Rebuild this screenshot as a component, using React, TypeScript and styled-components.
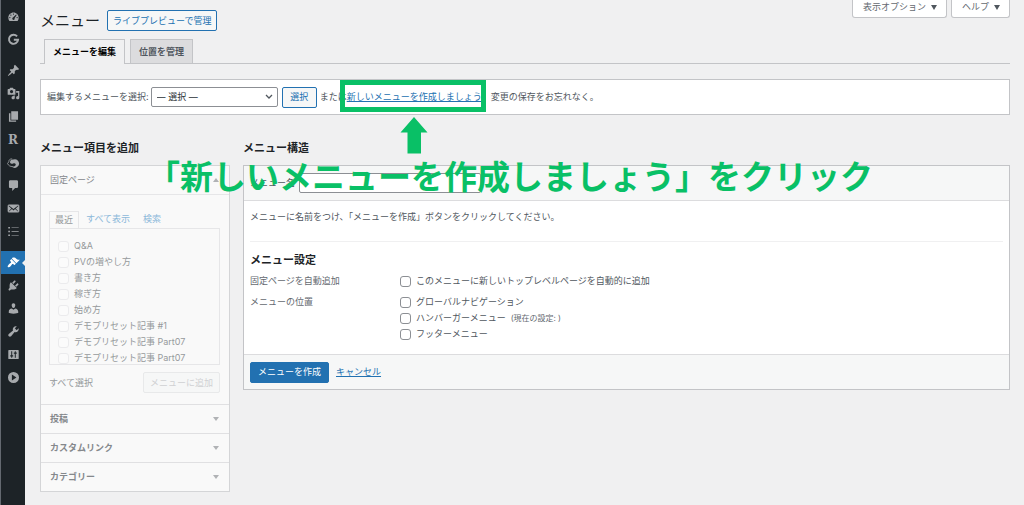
import React from "react";
import styled, { createGlobalStyle, css } from "styled-components";

const GlobalStyle = createGlobalStyle`
  *, *::before, *::after { box-sizing: border-box; }
  body {
    margin: 0;
    background: #f0f0f1;
    color: #50575e;
    font: 9px/16px Inter, "Noto Sans CJK JP", sans-serif;
  }
  h1, h2, h3, p, ul, fieldset { margin: 0; padding: 0; border: 0; }
  ul { list-style: none; }
  button, input, select { font: inherit; color: inherit; margin: 0; }
  a { color: #2271b1; }
`;

const Page = styled.div`
  position: relative;
  display: flex;
  min-height: 100vh;
  overflow: hidden;
`;

/* ---------- admin menu ---------- */

const Sidebar = styled.nav`
  flex: 0 0 25px;
  padding-top: 5px;
  background: #1d2327;
  border-left: 1px solid #646970;
`;

const MenuLink = styled.a<{ $active?: boolean; $spaced?: boolean }>`
  position: relative;
  display: flex;
  align-items: center;
  justify-content: center;
  height: 23px;
  margin-top: ${(p) => (p.$spaced ? 8 : 0)}px;
  color: ${(p) => (p.$active ? "#fff" : "#a7aaad")};
  background: ${(p) => (p.$active ? "#2271b1" : "transparent")};
  text-decoration: none;
  ${(p) =>
    p.$active &&
    css`
      &::after {
        content: "";
        position: absolute;
        right: 0;
        border: 3px solid transparent;
        border-right-color: #f0f0f1;
        border-left: 0;
      }
    `}
  svg { width: 13px; height: 13px; fill: currentColor; }
`;

const Initial = styled.span`
  font: bold 12px/14px "DejaVu Serif", serif;
`;

const paths = {
  dashboard:
    "M3.76 17h12.48A7.98 7.98 0 0 0 18 12c0-4.42-3.58-8-8-8s-8 3.58-8 8c0 1.89.66 3.63 1.76 5zM10 5.2a1 1 0 1 1 0 2 1 1 0 0 1 0-2zM6 6.8a1 1 0 1 1 0 2 1 1 0 0 1 0-2zm8 0 .9.9-3.2 4.9c.4 1.500-.4 2.600-1.700 2.600-1.300 0-2.200-1.200-1.800-2.400.2-.6.5-.9 1-1.200zM4.400 10.600a1 1 0 1 1 0 2 1 1 0 0 1 0-2zm11.200 0a1 1 0 1 1 0 2 1 1 0 0 1 0-2z",
  pin: "M10.44 3.02l1.82-1.82 6.36 6.35-1.83 1.82c-1.05-.68-2.48-.57-3.41.36l-.75.75c-.92.93-1.04 2.35-.35 3.41l-1.83 1.82-2.41-2.41-2.8 2.79c-.42.42-3.38 2.71-3.8 2.29s1.86-3.39 2.28-3.81l2.79-2.79L4.1 9.36l1.83-1.82c1.05.69 2.48.57 3.4-.36l.75-.75c.93-.92 1.05-2.35.36-3.41z",
  media:
    "M13 11V4c0-.55-.45-1-1-1h-1.67L9 1H5L3.67 3H2c-.55 0-1 .45-1 1v7c0 .55.45 1 1 1h10c.55 0 1-.45 1-1zM7 4.500a2.500 2.500 0 1 1 0 5 2.500 2.500 0 0 1 0-5zM14 6h5v10.500c0 1.380-1.120 2.500-2.500 2.500S14 17.880 14 16.500s1.120-2.500 2.500-2.500c.17 0 .34.02.5.05V9h-3V6zm-4 8.050V13h2v3.500c0 1.380-1.120 2.500-2.500 2.500S7 17.880 7 16.500 8.120 14 9.500 14c.17 0 .34.02.5.05z",
  page: "M6.500 2H17v13H6.500zM3 5h2.300v11.200H14V18H3z",
  comment:
    "M5 2h10c1.1 0 2 .9 2 2v8c0 1.100-.9 2-2 2h-2.500L8 18.500V14H5c-1.100 0-2-.9-2-2V4c0-1.100.9-2 2-2z",
  mail: "M2.500 4h15L19 5.500v9L17.500 16h-15L1 14.500v-9zM3 5.300 2.400 6l4.200 4-4 4.200.5.500 4.500-3.800L10 13l2.400-2.100 4.500 3.800.5-.5-4-4.200 4.200-4-.6-.7L10 10.700z",
  brush:
    "M14.480 11.060 7.410 3.990l1.500-1.500c.5-.56 2.300-.47 3.510.32 1.210.8 1.430 1.280 2.910 2.100 1.180.64 2.450 1.260 4.450.85zm-.71.71L6.700 4.700 4.930 6.470c-.39.39-.39 1.020 0 1.410l1.060 1.060c.39.39.39 1.030 0 1.420-.6.6-1.430 1.110-2.210 1.690-.35.26-.7.53-1.010.84C1.430 14.230.4 16.080 1.400 17.070c.99 1 2.840-.03 4.180-1.360.31-.31.58-.66.85-1.020.57-.78 1.080-1.610 1.690-2.210.39-.39 1.020-.39 1.410 0l1.060 1.060c.39.39 1.020.39 1.410 0z",
  plugin:
    "M13.110 4.360 9.870 7.600 8 5.730l3.240-3.240c.35-.34 1.050-.2 1.560.32.52.51.66 1.210.31 1.550zm-8 1.770.91-1.120 9.010 9.010-1.190.84c-.71.71-2.630 1.160-3.820 1.160H6.140L4.900 17.260c-.59.59-1.540.59-2.120 0-.59-.58-.59-1.530 0-2.120l1.240-1.240v-3.880c0-1.130.4-3.190 1.090-3.890zm7.260 3.970 3.240-3.240c.34-.35 1.040-.21 1.550.31.52.51.66 1.210.31 1.550l-3.240 3.250z",
  user: "M10 9.250c-2.270 0-2.730-3.440-2.730-3.440C7 4.020 7.820 2 9.970 2c2.160 0 2.980 2.020 2.710 3.810 0 0-.41 3.440-2.680 3.440zm0 2.570L12.720 10c2.390 0 4.520 2.330 4.520 4.530v2.490s-3.650 1.130-7.240 1.130c-3.650 0-7.240-1.130-7.240-1.130v-2.490c0-2.250 1.940-4.480 4.470-4.480z",
  wrench:
    "M16.680 9.770c-1.340 1.340-3.300 1.670-4.950.99l-5.410 6.520c-.99.99-2.590.99-3.580 0s-.99-2.590 0-3.570l6.520-5.420c-.68-1.650-.35-3.610.99-4.950 1.280-1.280 3.120-1.620 4.720-1.060l-2.890 2.890 2.820 2.820 2.860-2.870c.53 1.580.18 3.390-1.080 4.650z",
  sliders:
    "M18 16V4c0-.55-.45-1-1-1H3c-.55 0-1 .45-1 1v12c0 .55.45 1 1 1h14c.55 0 1-.45 1-1zM8 11h1.500v2H8v2H6.500v-2H5v-2h1.500V5H8zm5.500-2v6H12V9h-1.500V7H12V5h1.500v2H15v2z",
  play: "M10 1.500a8.500 8.500 0 1 0 0 17 8.500 8.500 0 0 0 0-17zM7.500 5.500 14.500 10l-7 4.500z",
  list: "M2 3h2.500v2.500H2zM2 8.700h2.500v2.500H2zM2 14.500h2.500V17H2zM7 3.700h11v1.100H7zM7 9.400h11v1.100H7zM7 15.200h11v1.100H7z",
  bird: "M9.500 5.500A6.500 6.500 0 1 1 7 15.800c2.600.9 5.300.2 6.200-1.600.7-1.500-.1-3-1.700-3.200-1.700-.2-2.500 1.200-4.300 1-1.700-.1-2.800-1.500-2.500-3.200.4-2.100 2.500-3.500 4.800-3.300z",
};

const Icon = ({ name }: { name: keyof typeof paths }) => (
  <svg viewBox="0 0 20 20" fillRule="evenodd" aria-hidden="true">
    <path d={paths[name]} />
  </svg>
);

const StrokePath = styled.path`
  fill: none;
  stroke: currentColor;
`;

const GIcon = () => (
  <svg viewBox="0 0 20 20" aria-hidden="true">
    <StrokePath d="M15.500 5.300A7 7 0 1 0 17 10.500h-6.500" strokeWidth="3" />
  </svg>
);

const BirdIcon = () => (
  <svg viewBox="0 0 20 20" aria-hidden="true">
    <path d={paths.bird} />
    <StrokePath d="M8 4.500C4.500 4 2.500 6.500 2.800 9L.8 11.500c1.500 3.500 4.500 5 8 4.800" strokeWidth="1.200" />
  </svg>
);

type Item = { label: string; icon: React.ReactNode; spaced?: boolean; active?: boolean };

const menuItems: Item[] = [
  { label: "ダッシュボード", icon: <Icon name="dashboard" /> },
  { label: "Site Kit", icon: <GIcon /> },
  { label: "投稿", icon: <Icon name="pin" />, spaced: true },
  { label: "メディア", icon: <Icon name="media" /> },
  { label: "固定ページ", icon: <Icon name="page" /> },
  { label: "Rinker", icon: <Initial>R</Initial> },
  { label: "吹き出し", icon: <BirdIcon /> },
  { label: "コメント", icon: <Icon name="comment" /> },
  { label: "お問い合わせ", icon: <Icon name="mail" /> },
  { label: "目次", icon: <Icon name="list" /> },
  { label: "外観", icon: <Icon name="brush" />, spaced: true, active: true },
  { label: "プラグイン", icon: <Icon name="plugin" /> },
  { label: "ユーザー", icon: <Icon name="user" /> },
  { label: "ツール", icon: <Icon name="wrench" /> },
  { label: "設定", icon: <Icon name="sliders" /> },
  { label: "メニューを閉じる", icon: <Icon name="play" /> },
];

/* ---------- page header ---------- */

const Main = styled.main`
  flex: 1;
  min-width: 0;
  padding: 0 14px 12px 15px;
`;

const Header = styled.header`
  display: flex;
  justify-content: space-between;
  align-items: flex-start;
  height: 39px;
`;

const TitleRow = styled.div`
  display: flex;
  align-items: center;
  gap: 7px;
  padding-top: 10px;
`;

const Title = styled.h1`
  font-size: 15px;
  line-height: 20px;
  font-weight: 400;
  color: #1d2327;
`;

const OutlineButton = styled.button`
  height: 21px;
  padding: 0 5px;
  border: 1px solid #2271b1;
  border-radius: 2px;
  background: #f6f7f7;
  color: #2271b1;
  line-height: 16px;
`;

const MetaLinks = styled.div`
  display: flex;
  gap: 4px;
`;

const MetaButton = styled.button`
  display: flex;
  align-items: center;
  gap: 5px;
  height: 18px;
  padding: 0 9px 3px 10px;
  border: 1px solid #c3c4c7;
  border-top: 0;
  border-radius: 0 0 3px 3px;
  background: #fff;
  color: #646970;
`;

const Caret = styled.span<{ $up?: boolean; $faint?: boolean }>`
  border: 3px solid transparent;
  border-top: ${(p) => (p.$up ? "0" : p.$faint ? "4px solid" : "5px solid")};
  border-bottom: ${(p) => (p.$up ? "4px solid" : "0")};
  color: ${(p) => (p.$faint ? "#b0b2b5" : "#50575e")};
`;

const Tabs = styled.nav`
  display: flex;
  gap: 5px;
  padding-left: 4px;
  border-bottom: 1px solid #c3c4c7;
`;

const Tab = styled.a<{ $current?: boolean }>`
  height: ${(p) => (p.$current ? 25 : 24)}px;
  margin-bottom: ${(p) => (p.$current ? -1 : 0)}px;
  padding: 4px 8px;
  border: 1px solid #c3c4c7;
  border-bottom: 0;
  background: ${(p) => (p.$current ? "#f0f0f1" : "#dcdcde")};
  color: ${(p) => (p.$current ? "#000" : "#50575e")};
  font-weight: 700;
  text-decoration: none;
`;

/* ---------- menu chooser ---------- */

const Chooser = styled.form`
  display: flex;
  align-items: center;
  height: 36px;
  margin-top: 15px;
  padding: 0 6px;
  border: 1px solid #c3c4c7;
  background: #fff;
  white-space: nowrap;
`;

const SelectBox = styled.div`
  position: relative;
  width: 127px;
  margin: 0 4px 0 2px;
  svg { position: absolute; right: 5px; top: 7px; width: 8px; height: 6px; }
`;

const Select = styled.select`
  appearance: none;
  display: block;
  width: 100%;
  height: 20px;
  padding: 0 16px 0 5px;
  border: 1px solid #8c8f94;
  border-radius: 2px;
  background: #fff;
  color: #2c3338;
`;

const ChooserNote = styled.p`
  margin-left: 3px;
`;

const LinkTarget = styled.span`
  position: relative;
  display: inline-block;
`;

const Highlight = styled.span`
  position: absolute;
  inset: -9px -4px -7px -7px;
  border: 5px solid #09c066;
`;

const Arrow = styled.svg`
  position: absolute;
  top: 28px;
  left: 53px;
  width: 28px;
  height: 37px;
  fill: #09c066;
`;

const Caption = styled.strong`
  position: absolute;
  top: 155px;
  left: 147px;
  color: #09c066;
  font: 700 33px/40px "Noto Sans CJK JP", sans-serif;
  white-space: nowrap;
  pointer-events: none;
`;

/* ---------- columns ---------- */

const Columns = styled.div`
  display: grid;
  grid-template-columns: 190px minmax(0, 1fr);
  column-gap: 13px;
  align-items: start;
  margin-top: 25px;
`;

const Heading = styled.h2`
  font-size: 11px;
  line-height: 16px;
  font-weight: 700;
  color: #1d2327;
`;

const Panel = styled.div`
  margin-top: 9px;
  border: 1px solid #c3c4c7;
  background: #fff;
`;

const Accordion = styled(Panel)`
  border-color: #d4d5d7;
  background: #f9f9f9;
  color: #96999c;
`;

const SectionButton = styled.button<{ $open?: boolean }>`
  display: flex;
  align-items: center;
  justify-content: space-between;
  width: 100%;
  height: 29px;
  padding: 0 10px 0 9px;
  border: 0;
  border-top: ${(p) => (p.$open ? "0" : "1px solid #e0e0e2")};
  border-bottom: ${(p) => (p.$open ? "1px solid #e6e6e8" : "0")};
  background: transparent;
  color: #85888c;
  font-weight: ${(p) => (p.$open ? 400 : 700)};
`;

const SectionBody = styled.div`
  padding: 16px 9px 11px 8px;
`;

const SmallTabs = styled.div`
  display: flex;
  a { padding: 0 6px 0 7px; color: #8cb8d9; text-decoration: none; }
`;

const SmallTab = styled.a<{ $current?: boolean }>`
  height: 17px;
  ${(p) =>
    p.$current &&
    css`
      && { padding: 0 5px; color: #96999c; }
      margin-bottom: -1px;
      border: 1px solid #e6e6e8;
      border-bottom: 0;
      background: #f9f9f9;
    `}
`;

const PageList = styled.ul`
  height: 137px;
  padding: 9px 8px 0;
  border: 1px solid #e6e6e8;
  overflow: hidden;
`;

const CheckLabel = styled.label`
  display: flex;
  align-items: center;
  gap: 5px;
  line-height: 16px;
  white-space: nowrap;
`;

const Checkbox = styled.input.attrs({ type: "checkbox" })<{ $faint?: boolean }>`
  appearance: none;
  flex: none;
  width: 11px;
  height: 11px;
  border: 1px solid ${(p) => (p.$faint ? "#ebebed" : "#8c8f94")};
  border-radius: 3px;
  background: ${(p) => (p.$faint ? "#fbfbfb" : "#fff")};
`;

const ListActions = styled.div`
  display: flex;
  align-items: center;
  justify-content: space-between;
  margin-top: 7px;
`;

const FaintButton = styled.button`
  height: 21px;
  padding: 0 6px;
  border: 1px solid #e8e9ea;
  border-radius: 2px;
  background: #f6f7f7;
  color: #d0d1d3;
`;

const PanelBar = styled.div<{ $bottom?: boolean }>`
  display: flex;
  align-items: center;
  gap: 7px;
  height: 35px;
  padding: 0 6px;
  background: #f6f7f7;
  border: 0 solid #dcdcde;
  border-width: ${(p) => (p.$bottom ? "1px 0 0" : "0 0 1px")};
`;

const NameLabel = styled.label`
  display: flex;
  align-items: center;
  gap: 4px;
`;

const NameInput = styled.input`
  width: 182px;
  height: 20px;
  border: 1px solid #8c8f94;
  border-radius: 2px;
  background: #fff;
`;

const PanelBody = styled.div`
  padding: 8px 6px 12px;
`;

const Settings = styled.section`
  margin-top: 16px;
  padding-top: 10px;
  border-top: 1px solid #f0f0f1;
`;

const SettingRow = styled.fieldset`
  display: grid;
  grid-template-columns: 150px 1fr;
  margin-top: 5px;
`;

const SettingName = styled.span`
  color: #646970;
`;

const Current = styled.small`
  font-size: 8px;
  color: #646970;
`;

const PrimaryButton = styled.button`
  height: 21px;
  padding: 0 7px;
  border: 1px solid #2271b1;
  border-radius: 2px;
  background: #2271b1;
  color: #fff;
`;

const pages = [
  "Q&A",
  "PVの増やし方",
  "書き方",
  "稼ぎ方",
  "始め方",
  "デモプリセット記事 #1",
  "デモプリセット記事 Part07",
  "デモプリセット記事 Part07",
];

const App = () => (
  <Page>
    <GlobalStyle />
    <Sidebar aria-label="メインメニュー">
      {menuItems.map((m) => (
        <MenuLink key={m.label} href="#" aria-label={m.label} $active={m.active} $spaced={m.spaced}>
          {m.icon}
        </MenuLink>
      ))}
    </Sidebar>

    <Main>
      <Header>
        <TitleRow>
          <Title>メニュー</Title>
          <OutlineButton type="button">ライブプレビューで管理</OutlineButton>
        </TitleRow>
        <MetaLinks>
          <MetaButton type="button">表示オプション<Caret /></MetaButton>
          <MetaButton type="button">ヘルプ<Caret /></MetaButton>
        </MetaLinks>
      </Header>

      <Tabs>
        <Tab href="#" $current>メニューを編集</Tab>
        <Tab href="#">位置を管理</Tab>
      </Tabs>

      <Chooser>
        <label htmlFor="menu">編集するメニューを選択:</label>
        <SelectBox>
          <Select id="menu">
            <option>— 選択 —</option>
          </Select>
          <svg viewBox="0 0 8 6" aria-hidden="true">
            <path d="M1 1l3 3 3-3" fill="none" stroke="#50575e" strokeWidth="1.3" />
          </svg>
        </SelectBox>
        <OutlineButton type="button">&nbsp;選択&nbsp;</OutlineButton>
        <ChooserNote>
          または
          <LinkTarget>
            <a href="#">新しいメニューを作成しましょう</a>
            <Highlight />
            <Arrow viewBox="0 0 28 37" aria-hidden="true">
              <path d="M14 0l13.500 15.500H21V36.500H7.500V15.500H.5z" />
            </Arrow>
          </LinkTarget>
          。変更の保存をお忘れなく。
        </ChooserNote>
      </Chooser>

      <Columns>
        <section>
          <Heading>メニュー項目を追加</Heading>
          <Accordion>
            <SectionButton type="button" $open>固定ページ<Caret $up $faint /></SectionButton>
            <SectionBody>
              <SmallTabs>
                <SmallTab href="#" $current>最近</SmallTab>
                <SmallTab href="#">すべて表示</SmallTab>
                <SmallTab href="#">検索</SmallTab>
              </SmallTabs>
              <PageList>
                {pages.map((name, i) => (
                  <li key={i}>
                    <CheckLabel><Checkbox $faint />{name}</CheckLabel>
                  </li>
                ))}
              </PageList>
              <ListActions>
                <span>すべて選択</span>
                <FaintButton type="button">メニューに追加</FaintButton>
              </ListActions>
            </SectionBody>
            {["投稿", "カスタムリンク", "カテゴリー"].map((name) => (
              <SectionButton type="button" key={name}>{name}<Caret $faint /></SectionButton>
            ))}
          </Accordion>
        </section>

        <section>
          <Heading>メニュー構造</Heading>
          <Panel>
            <PanelBar>
              <NameLabel>メニュー名<NameInput type="text" /></NameLabel>
            </PanelBar>
            <PanelBody>
              <p>メニューに名前をつけ、「メニューを作成」ボタンをクリックしてください。</p>
              <Settings>
                <Heading as="h3">メニュー設定</Heading>
                <SettingRow>
                  <SettingName>固定ページを自動追加</SettingName>
                  <CheckLabel><Checkbox />このメニューに新しいトップレベルページを自動的に追加</CheckLabel>
                </SettingRow>
                <SettingRow>
                  <SettingName>メニューの位置</SettingName>
                  <div>
                    <CheckLabel><Checkbox />グローバルナビゲーション</CheckLabel>
                    <CheckLabel><Checkbox />ハンバーガーメニュー<Current>(現在の設定: )</Current></CheckLabel>
                    <CheckLabel><Checkbox />フッターメニュー</CheckLabel>
                  </div>
                </SettingRow>
              </Settings>
            </PanelBody>
            <PanelBar $bottom>
              <PrimaryButton type="button">メニューを作成</PrimaryButton>
              <a href="#">キャンセル</a>
            </PanelBar>
          </Panel>
        </section>
      </Columns>
    </Main>

    <Caption>「新しいメニューを作成しましょう」をクリック</Caption>
  </Page>
);

export default App;
